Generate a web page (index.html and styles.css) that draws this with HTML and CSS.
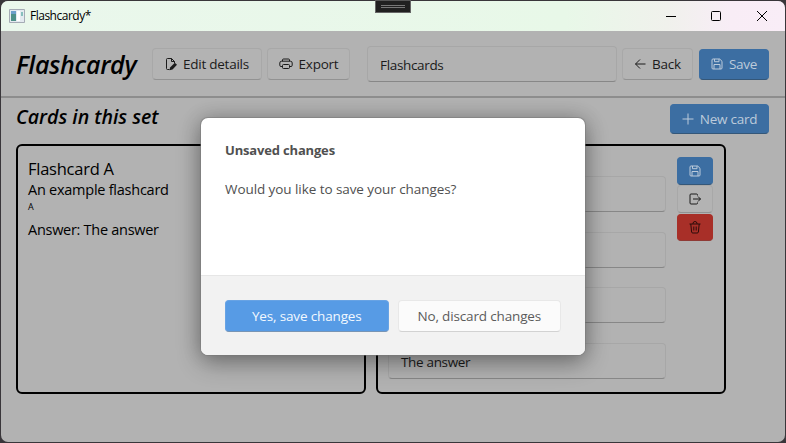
FILE: index.html
```html
<!DOCTYPE html>
<html lang="en">
<head>
<meta charset="utf-8">
<title>Flashcardy*</title>
<link rel="stylesheet" href="styles.css">
</head>
<body>
<svg width="0" height="0" class="defs">
  <symbol id="save" viewBox="0 0 12 12"><path d="M2 1h6.7L11 3.3V10a1 1 0 0 1-1 1H2a1 1 0 0 1-1-1V2a1 1 0 0 1 1-1zM3.5 1v2.7h4.5V1M3 11V6.5h6V11"/></symbol>
</svg>
<div class="window">
  <div class="titlebar">
    <svg class="app-icon" width="16" height="14" viewBox="0 0 16 14"><path class="frame" d="M.5.5h15v13H.5z"/><rect x="2" y="3" width="5" height="9" fill="#4d9088"/><rect x="2" y="2" width="5" height="3" fill="#6c9fca"/><rect x="8" y="2" width="3" height="10" fill="#fff"/><rect x="12" y="3" width="2" height="4" fill="#87bfbd"/></svg>
    <span class="app-name">Flashcardy*</span>
    <svg class="controls" width="102" height="12" viewBox="0 0 102 12"><path d="M0 6.5h10"/><rect x="45.5" y="1.5" width="9" height="9" rx="1"/><path d="M91 1l10 10M101 1L91 11"/></svg>
  </div>
  <header class="header">
    <h1 class="brand">Flashcardy</h1>
    <button class="btn edit"><svg width="12" height="14" viewBox="0 0 12 14"><path d="M4.5 12.5h-2a1 1 0 0 1-1-1v-9a1 1 0 0 1 1-1h4l3 3V6M6.500 1.500v3h3"/><path class="pen" d="M4.500 13.300l.6-2.900L9.800 5.700 12 7.800l-4.500 4.700z"/></svg><span>Edit details</span></button>
    <button class="btn export"><svg width="14" height="12" viewBox="0 0 14 12"><path d="M3.500 3.200V2a1 1 0 0 1 1-1h5a1 1 0 0 1 1 1v1.200M3.500 8.500H2a1.200 1.200 0 0 1-1.200-1.200V5A1.800 1.800 0 0 1 2.600 3.200h8.800A1.800 1.800 0 0 1 13.200 5v2.300A1.200 1.200 0 0 1 12 8.500h-1.500M4.500 6.500h5a1 1 0 0 1 1 1V9.500a1 1 0 0 1-1 1h-5a1 1 0 0 1-1-1v-2a1 1 0 0 1 1-1z"/></svg><span>Export</span></button>
    <div class="field set-name"><span>Flashcards</span></div>
    <button class="btn back"><svg width="12" height="12" viewBox="0 0 12 12"><path d="M11.500 6H1.500M6 1.500L1.500 6 6 10.500"/></svg><span>Back</span></button>
    <button class="btn primary save"><svg width="12" height="12"><use href="#save"/></svg><span>Save</span></button>
  </header>
  <main class="main">
    <div class="section-head">
      <h2 class="section-title">Cards in this set</h2>
      <button class="btn primary new"><svg width="12" height="12" viewBox="0 0 12 12"><path d="M6 .5v11M.5 6h11"/></svg><span>New card</span></button>
    </div>
    <div class="cards">
      <article class="card">
        <div class="name">Flashcard A</div>
        <div class="question">An example flashcard</div>
        <div class="hint">A</div>
        <div class="answer">Answer: The answer</div>
      </article>
      <article class="card editor">
        <div class="fields">
          <div class="field"></div>
          <div class="field"></div>
          <div class="field"></div>
          <div class="field"><span>The answer</span></div>
        </div>
        <div class="actions">
          <button class="btn primary"><svg width="12" height="12"><use href="#save"/></svg></button>
          <button class="btn"><svg width="12" height="12" viewBox="0 0 12 12"><path d="M8.500 2.500V2a1 1 0 0 0-1-1H2a1 1 0 0 0-1 1v8a1 1 0 0 0 1 1h5.500a1 1 0 0 0 1-1v-.5M4 6h7.500M9 3.500L11.500 6 9 8.500"/></svg></button>
          <button class="btn danger"><svg width="12" height="13" viewBox="0 0 12 13"><path d="M.5 3h11M4 3V2.500a2 2 0 0 1 4 0V3M1.800 3l.8 8a1.200 1.200 0 0 0 1.200 1h4.400a1.200 1.200 0 0 0 1.200-1l.8-8M4.800 5.500v4M7.200 5.500v4"/></svg></button>
        </div>
      </article>
    </div>
  </main>
</div>
<div class="grip"></div>
<div class="dialog" role="dialog">
  <div class="dialog-body">
    <div class="dialog-title">Unsaved changes</div>
    <div class="dialog-text">Would you like to save your changes?</div>
  </div>
  <div class="dialog-foot">
    <button class="choice yes">Yes, save changes</button>
    <button class="choice no">No, discard changes</button>
  </div>
</div>
</body>
</html>
```
FILE: styles.css
```css
* { box-sizing: border-box; }
body { margin: 0; width: 786px; height: 443px; padding: 1px; background: #39363a; overflow: hidden; font-family: "Open Sans", "Noto Sans", sans-serif; font-size: 13.5px; color: #000; }
.defs { position: absolute; }
svg { fill: none; stroke: currentColor; stroke-width: 1; flex: none; }
button { font: inherit; margin: 0; }
span, .name, .question, .hint, .answer, h1, h2, .dialog-title, .dialog-text { white-space: nowrap; }
.window { width: 784px; height: 441px; background: #b2b2b2; border-radius: 7px; overflow: hidden; }
.titlebar { height: 30px; display: flex; align-items: center; padding: 0 17px 1px 8px; background: linear-gradient(90deg, #eaf7ec 0, #e8f8e8 72%, #f0f1ec 85%, #f8edf6 93%, #f9edf7 100%); }
.app-icon { stroke: none; }
.frame { fill: #e4eaf0; stroke: #a5abb5; }
.app-name { margin-left: 5px; font-size: 12px; line-height: 16px; letter-spacing: -.5px; }
.controls { margin-left: auto; }
.header { height: 67px; display: flex; align-items: center; padding: 0 15px; border-bottom: 2px solid #8d8d8d; }
.brand { margin: 0; width: 136px; font-size: 25px; line-height: 32px; font-style: italic; font-weight: 600; letter-spacing: -.3px; }
.btn { height: 32px; display: flex; align-items: center; justify-content: center; padding: 0; border: 1px solid #a8a8a8; border-bottom-color: #929292; border-radius: 4px; background: #b3b3b3; color: #1b1b1b; line-height: 20px; }
.btn span { margin-left: 6px; letter-spacing: -.25px; }
.primary { background: #3c6ea2; border-color: #3c6ea2; border-bottom-color: #345779; color: #bccbdb; }
.edit { width: 110px; }
.export { width: 83px; margin-left: 5px; }
.field { height: 36px; display: flex; align-items: center; padding: 2px 12px 0; border: 1px solid #a7a7a7; border-bottom-color: #878787; border-radius: 4px; color: #1b1b1b; }
.field span { letter-spacing: -.33px; }
.set-name { width: 250px; margin-left: 17px; }
.back { width: 71px; margin-left: 5px; }
.save { width: 70px; height: 31px; margin: 1px 0 0 6px; }
.pen { fill: currentColor; stroke: none; }
.main { padding: 6px 15px; }
.section-head { height: 40px; display: flex; justify-content: space-between; align-items: flex-start; }
.section-title { margin: 0; font-size: 19.5px; line-height: 26px; font-style: italic; font-weight: 600; letter-spacing: 0; }
.new { width: 99px; height: 30px; margin-right: 1px; }
.cards { display: flex; gap: 10px; }
.card { width: 350px; height: 250px; border: 2px solid #000; border-radius: 6px; padding: 12px 10px; }
.name { font-size: 16.5px; line-height: 22px; letter-spacing: -.25px; }
.question { font-size: 14.5px; line-height: 20px; letter-spacing: -.25px; }
.hint { font-size: 9px; line-height: 14px; }
.answer { margin-top: 5px; font-size: 14.5px; line-height: 22px; letter-spacing: -.28px; }
.editor { display: flex; gap: 11px; padding: 11px 11px 0 10px; }
.fields { width: 278px; padding-top: 19px; display: grid; grid-auto-rows: 36px; align-content: start; gap: 19.600px; }
.actions { width: 36px; }
.actions .btn { width: 36px; height: 28px; }
.actions .danger { height: 27px; margin-top: 1px; background: #a82f28; border-color: #a82f28; border-bottom-color: #8f3a35; color: #2a0c0a; }
.grip { position: absolute; left: 375px; top: 0; width: 36px; height: 13px; background: linear-gradient(#777, #777) 50% 4px / 24px 1px no-repeat, linear-gradient(#777, #777) 50% 6px / 24px 1px no-repeat, #202020; border: 1px solid #666; border-top: 1px solid #555; }
.dialog { position: absolute; left: 201px; top: 118px; width: 384px; height: 237px; border-radius: 7px; background: #fff; color: #505050; box-shadow: 0 0 0 1px rgba(120,120,120,.5), 0 8px 24px rgba(0,0,0,.32), 0 0 20px rgba(0,0,0,.2); overflow: hidden; }
.dialog-body { height: 157px; padding: 22px 24px; }
.dialog-title { font-weight: 700; font-size: 13px; line-height: 20px; letter-spacing: -.17px; }
.dialog-text { margin-top: 19px; line-height: 20px; letter-spacing: -.07px; }
.dialog-foot { height: 80px; display: flex; gap: 9px; padding: 24px 24px 0; border-top: 1px solid #e6e6e6; background: #f2f2f2; }
.choice { width: 164px; height: 32px; border-radius: 4px; padding: 0; line-height: 20px; letter-spacing: -.15px; }
.yes { background: #579be5; color: #f2f8ff; border: 1px solid #68a3e4; border-bottom-color: #7895b5; }
.no { background: #fbfbfb; color: #5b5b5b; border: 1px solid #e8e8e8; border-bottom-color: #d2d2d2; }
```
